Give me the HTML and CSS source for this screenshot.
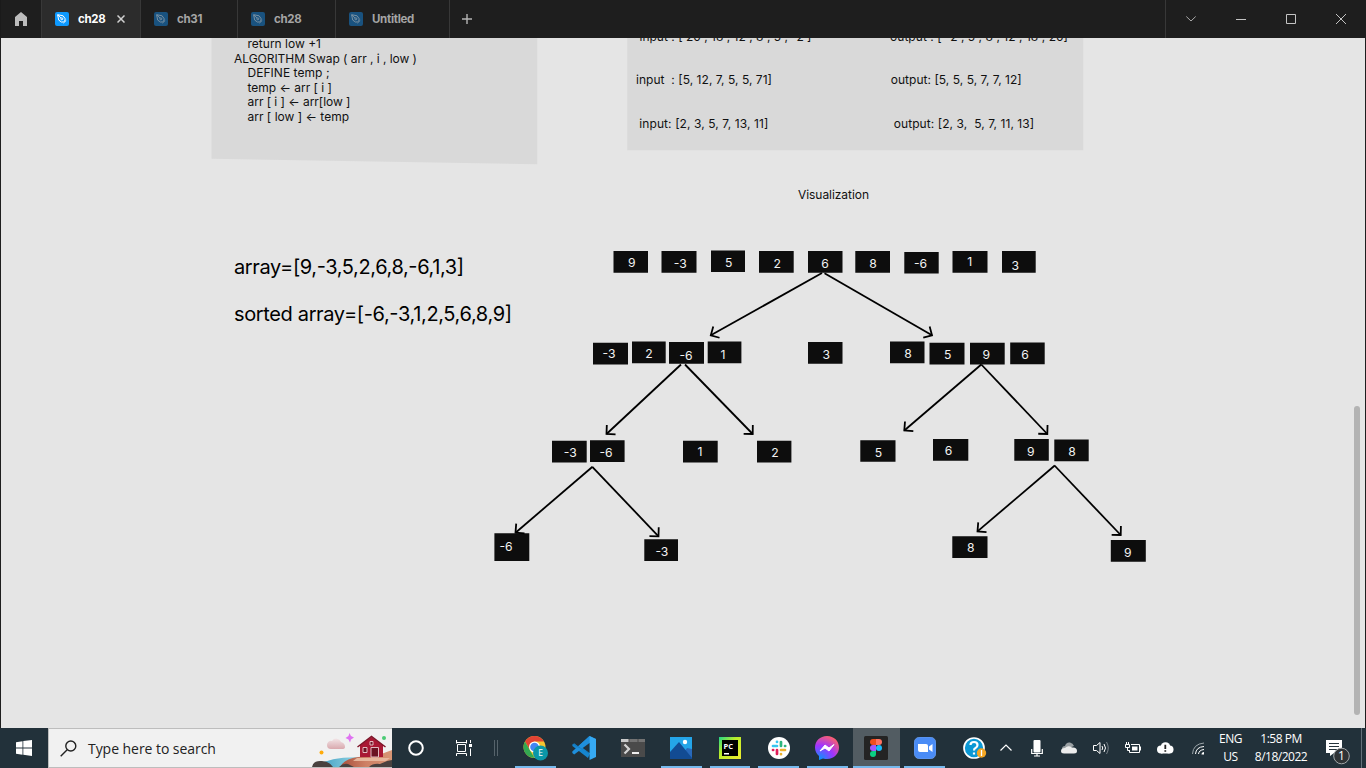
FILE: index.html
```html
<!DOCTYPE html>
<html lang="en">
<head>
<meta charset="utf-8">
<title>ch28</title>
<link rel="stylesheet" href="styles.css">
</head>
<body>
<svg width="0" height="0" class="defs">
  <symbol id="nib" viewBox="0 0 14 14">
    <rect width="14" height="14" rx="2" class="nib-bg"/>
    <g fill="none" class="nib-line" stroke-width="1"><path d="M2.6 2.7 8.1 3.8 10.2 6.8 9.8 8.8 8.6 9.8 6.6 10.1 3.7 8.1Z"/><path d="M2.8 2.9 6 6.1M8.4 11.1 11.2 8.4"/><circle cx="6.8" cy="6.8" r="1"/></g>
  </symbol>
</svg>
<header class="tabs">
  <div class="home"><svg width="12" height="14" viewBox="0 0 12 14"><path d="M6 0 12 5V14H8V9H4V14H0V5Z" fill="#bcbcbc"/></svg></div>
  <div class="tab active"><svg width="14" height="14"><use href="#nib"/></svg><span>ch28</span><svg class="close" width="8" height="8" viewBox="0 0 8 8"><path d="M.5.5 7.5 7.5M7.5.5.5 7.5" stroke="#d0d0d0" stroke-width="1.5"/></svg></div>
  <div class="tab second"><svg width="14" height="14"><use href="#nib"/></svg><span>ch31</span></div>
  <div class="tab third"><svg width="14" height="14"><use href="#nib"/></svg><span>ch28</span></div>
  <div class="tab fourth"><svg width="14" height="14"><use href="#nib"/></svg><span>Untitled</span></div>
  <div class="add"><svg width="10" height="10" viewBox="0 0 10 10"><path d="M5 0V10M0 5H10" stroke="#b4b4b4" stroke-width="1.4"/></svg></div>
  <div class="controls">
    <span><svg width="12" height="8" viewBox="0 0 12 8"><path d="M1.3 1.5 6 6 10.7 1.5" fill="none" stroke="#aaa"/></svg></span>
    <span><svg width="10" height="10" viewBox="0 0 10 10"><path d="M0 5.5H10" stroke="#c4c4c4"/></svg></span>
    <span><svg width="10" height="10" viewBox="0 0 10 10"><path d="M.5.5H9.5V9.5H.5Z" fill="none" stroke="#c4c4c4"/></svg></span>
    <span><svg width="10" height="10" viewBox="0 0 10 10"><path d="M0 0 10 10M10 0 0 10" stroke="#c4c4c4"/></svg></span>
  </div>
</header>

<main class="canvas">
  <svg class="board" width="1366" height="690" viewBox="0 38 1366 690">
    <defs><marker id="head" viewBox="-10 -10 20 20" markerWidth="20" markerHeight="20" markerUnits="userSpaceOnUse" orient="auto"><path d="M-6.4 -6.4 0 0 -6.4 6.4" fill="none" stroke="#000" stroke-width="1.8"/></marker></defs>
    <path d="M211.5 38H537.3V164.3L211.5 158.7Z" class="panel"/>
    <path d="M627.3 38H1083.3V150.2H627.3Z" class="panel"/>
    <g class="note">
      <text x="247.5" y="48" textLength="73.5">return low +1</text>
      <text x="234" y="62.6" textLength="183">ALGORITHM Swap ( arr , i , low )</text>
      <text x="247.5" y="77" textLength="82">DEFINE temp ;</text>
      <text x="247.5" y="91.6" textLength="84.5">temp ← arr [ i ]</text>
      <text x="247.5" y="106" textLength="103">arr [ i ] ← arr[low ]</text>
      <text x="247.5" y="120.6" textLength="101.500">arr [ low ] ← temp</text>
      <text x="639.5" y="41.3" textLength="172">input : [ 20 , 18 , 12 , 8 , 5 , -2 ]</text>
      <text x="890" y="41.3" textLength="178">output : [ -2 , 5 , 8 , 12 , 18 , 20]</text>
      <text x="636" y="84.2" textLength="136">input  : [5, 12, 7, 5, 5, 71]</text>
      <text x="890.7" y="84.2" textLength="131">output: [5, 5, 5, 7, 7, 12]</text>
      <text x="639.3" y="127.8" textLength="129">input: [2, 3, 5, 7, 13, 11]</text>
      <text x="893.7" y="127.8" textLength="140.5">output: [2, 3,  5, 7, 11, 13]</text>
      <text x="798" y="199.2" textLength="71">Visualization</text>
    </g>
    <g class="big">
      <text x="234" y="273.5" textLength="230">array=[9,-3,5,2,6,8,-6,1,3]</text>
      <text x="234" y="320.6" textLength="278">sorted array=[-6,-3,1,2,5,6,8,9]</text>
    </g>
    <g class="boxes">
      <path d="M613.5 251h34.5v21.7h-34.5zM661.5 251h35v21.7h-35zM711 250.4h34v21.7h-34zM759 251h34.7v21.7H759zM808 251h34.5v21.7H808zM855.3 251H890v21.7h-34.7zM904.3 251.9h34.4v21.6h-34.4zM952.5 251h35v21.7h-35zM1002 251h33.7v21.7H1002z"/>
      <path d="M593 342.7h35v21.8h-35zM632 341.5h33.7v21.7H632zM669 342.1h35v21.7h-35zM707.7 341.5h33.7v21.7h-33.7zM808 342.1h34.5v21.7H808zM890 341.5h34.5v21.7H890zM929.5 342.7h35v21.8h-35zM970 342.7h34.7v21.8H970zM1010.2 342.4h34.5v21.8h-34.5z"/>
      <path d="M552 440.7h34.7v21.8H552zM590 440.2h34.6v21.8H590zM683 440.7h34.7v21.8H683zM757 440.7h34.4v21.8H757zM860.3 440.2h35.2v21.6h-35.2zM933 439h35.3v21.8H933zM1014.3 439h34.5v21.8h-34.5zM1054.3 439.5h34.4v21.8h-34.4z"/>
      <path d="M494.4 533.3h34.9V561h-34.9zM644.3 539.3H678V561h-33.7zM952.3 536.2h35.2V558h-35.2zM1110.8 540h35v21.7h-35z"/>
    </g>
    <g class="arrows">
      <path d="M822 273 710.8 335.3"/><path d="M824.5 273.3 932 335.3"/>
      <path d="M681 364.5 606.5 434"/><path d="M685 364.5 752.7 434"/>
      <path d="M981.3 364.5 904.3 430.5"/><path d="M981.3 364.5 1047.3 434"/>
      <path d="M592.5 466.8 515.5 532.7"/><path d="M592.3 466.8 658.5 536.3"/>
      <path d="M1054.8 465.5 977.5 531.4"/><path d="M1054.5 465.5 1120.7 535"/>
    </g>
    <g class="num">
      <text x="631.7" y="267.3">9</text><text x="680.3" y="267.6">-3</text><text x="728.7" y="267.3">5</text><text x="777.3" y="267.6">2</text><text x="825" y="268.3">6</text><text x="873" y="267.6">8</text><text x="920.5" y="268.3">-6</text><text x="969.7" y="266.3">1</text><text x="1015.3" y="269.6">3</text>
      <text x="609" y="358">-3</text><text x="649" y="357.6">2</text><text x="686" y="359.8">-6</text><text x="722.9" y="359">1</text><text x="826.3" y="358.6">3</text><text x="908" y="357.9">8</text><text x="947.7" y="359.3">5</text><text x="986.3" y="359.3">9</text><text x="1025" y="358.7">6</text>
      <text x="570.3" y="456.6">-3</text><text x="606" y="456.6">-6</text><text x="700" y="455.8">1</text><text x="775" y="456.7">2</text><text x="878.5" y="456.7">5</text><text x="948.5" y="455">6</text><text x="1030.8" y="455.8">9</text><text x="1072" y="456">8</text>
      <text x="506" y="551.3">-6</text><text x="661.9" y="556">-3</text><text x="970.7" y="552.3">8</text><text x="1127.7" y="556.5">9</text>
    </g>
  </svg>
  <i class="scroll"></i>
</main>

<footer class="taskbar">
  <div class="start"><svg width="16" height="16" viewBox="0 0 16 16" fill="#fff"><path d="M0 2.2 6.5 1.3V7.5H0ZM7.3 1.1 16 0V7.5H7.3ZM0 8.4H6.5V14.7L0 13.8ZM7.3 8.4H16V16L7.3 14.8Z"/></svg></div>
  <div class="search">
    <svg width="17" height="17" viewBox="0 0 17 17"><g fill="none" stroke="#222" stroke-width="1.4"><circle cx="10.8" cy="6" r="5"/><path d="M7.2 9.8.7 16.3"/></g></svg>
    <span>Type here to search</span>
    <svg class="scene" width="80" height="38" viewBox="312 729 80 38">
      <defs>
        <linearGradient id="hill" x2="1" y2="0"><stop stop-color="#a84f3c"/><stop offset=".5" stop-color="#ce8065"/><stop offset="1" stop-color="#d89675"/></linearGradient>
        <linearGradient id="river" x2="1" y2="0"><stop stop-color="#3f9cc0"/><stop offset="1" stop-color="#9bdce9"/></linearGradient>
        <linearGradient id="puff" x2="0" y2="1"><stop stop-color="#f2e4e6"/><stop offset="1" stop-color="#d9a9ae"/></linearGradient>
      </defs>
      <path d="M322 763Q334 757 362 757L346 768H318Z" fill="url(#river)"/>
      <path d="M340 767Q344 759 358 757L376 756 392 750V767Z" fill="url(#hill)"/>
      <path d="M353 761H386L390 758H357Z" fill="#e7b69c"/>
      <path d="M331 749A4 4 0 0 1 327 745 4 4 0 0 1 332 741 5 5 0 0 1 341 742Q345 743 345 747 345 749 342 749Z" fill="url(#puff)"/>
      <path d="M360 745 371.5 737 383 745V757H360Z" fill="#a91834"/>
      <path d="M357.5 747 371.5 736.5 385.5 747" fill="none" stroke="#7d1529" stroke-width="1.5"/>
      <path d="M371 747.5H378.500V757H371ZM363 747.5H367V752.5H363ZM370 741.5H373V745H370Z" fill="#6b1222" stroke="#ebcdd1" stroke-width=".9"/>
      <path d="M312 767Q313 761 320 761 328 760 333 767ZM339 767Q343 763 348 764L354 767ZM369 767Q373 763 380 764L387 761 392 760V767Z" fill="#49413f"/>
      <path d="M349.500 733 351 736 354 737.500 351 739.500 350 742.500 348.500 739.500 345.500 738 348.500 736Z" fill="#df73f1"/>
      <circle cx="321.500" cy="752.500" r="2" fill="#ffab0a"/><circle cx="384" cy="738" r="2" fill="#4bcb75"/>
    </svg>
  </div>
  <div class="sys"><svg width="18" height="18" viewBox="0 0 18 18"><circle cx="9" cy="9" r="6.8" fill="none" stroke="#fff" stroke-width="2"/></svg></div>
  <div class="sys"><svg width="17" height="16" viewBox="0 0 17 16"><path d="M.5 0V3.500M.5 2.500H10.500M10.500 0V3.500M1.500 4.500H9.500V11.500H1.500ZM.5 16V13.500H10.500V16M14.500 0V3M14.500 8.500V16" fill="none" stroke="#fff"/><path d="M13 4h3v3h-3z" fill="#fff"/></svg></div>
  <div class="sep"><i></i><i></i></div>
  <nav class="apps">
    <div class="app on"><svg width="26" height="26" viewBox="0 0 26 26"><circle cx="12.500" cy="12" r="11" fill="#f4c430"/><path d="M3 6.500A11 11 0 0 1 22 6.500H12.500L8 15Z" fill="#e24334"/><path d="M3 6.500 9 17 12.500 23A11 11 0 0 1 3 6.500Z" fill="#33a852"/><circle cx="12.500" cy="12" r="5.500" fill="#fff"/><circle cx="12.500" cy="12" r="4.300" fill="#4285f4"/><circle cx="18.500" cy="18" r="7.500" fill="#0b97a7"/><text x="18.500" y="21" class="badge-e">E</text></svg></div>
    <div class="app"><svg width="24" height="24" viewBox="0 0 24 24"><path d="M17.500 0 6 10.500 2.200 7.500.4 8.500V10L16 22 24 3Z" fill="#1686d0"/><path d="M17.500 0V7L2.200 18.500.3 17V15.500L17.500 0Z" fill="#1f8fdc"/><path d="M17.500 17 .4 8.500 2.200 7.500 17.500 18Z" fill="#1479bd"/><path d="M17.500 0 24 3V21L17.500 24Z" fill="#36a9f2"/><path d="M17.500 7V17L10.800 12Z" fill="#23333d"/></svg></div>
    <div class="app"><svg width="24" height="18" viewBox="0 0 24 18"><path d="M0 0H24V18H0Z" fill="#4a4a4a"/><path d="M0 0H24V3H0Z" fill="#737373"/><path d="M0 0H8V3H0Z" fill="#c9c9c9"/><path d="M17 0v3M8 0v3" stroke="#4a4a4a"/><path d="M3.500 5.500 8 10 3.500 14.500" fill="none" stroke="#d4d4d4" stroke-width="2.200"/><path d="M11 13H18V15H11Z" fill="#eee"/></svg></div>
    <div class="app on"><svg width="22" height="22" viewBox="0 0 22 22"><path d="M0 0H22V22H0Z" fill="#24a5e9"/><path d="M22 12V22H9L17 11Z" fill="#2869bb"/><path d="M0 15 9 5 22 21V22H0Z" fill="#124b93"/><circle cx="15" cy="5" r="2.200" fill="#fff"/></svg></div>
    <div class="app on"><svg width="22" height="22" viewBox="0 0 22 22"><defs><linearGradient id="pc" x2="1" y2="1"><stop stop-color="#21d789"/><stop offset=".4" stop-color="#b8ed2a"/><stop offset="1" stop-color="#f0ed31"/></linearGradient></defs><path d="M0 0H22V22H0Z" fill="url(#pc)"/><path d="M3 3H19V19H3Z"/><path d="M5 16H10V17.500H5Z" fill="#fff"/><text x="4.500" y="11.500" class="pc-text">PC</text></svg></div>
    <div class="app on"><svg width="22" height="22" viewBox="0 0 22 22"><circle cx="11" cy="11" r="11" fill="#fff"/><g stroke-width="2.700" stroke-linecap="round"><path d="M5 9H9M9 4.800V5" stroke="#36c5f0"/><path d="M13 5V9M17 9H17.200" stroke="#2eb67d"/><path d="M13 13H17M13 17V17.200" stroke="#ecb22e"/><path d="M9 13V17M5 13H5.200" stroke="#e01e5a"/></g></svg></div>
    <div class="app on"><svg width="24" height="24" viewBox="0 0 24 24"><defs><radialGradient id="msg" cx=".2" cy="1" r="1.100"><stop stop-color="#0099ff"/><stop offset=".55" stop-color="#a033ff"/><stop offset="1" stop-color="#ff6269"/></radialGradient></defs><path d="M12 0C5 0 0 5 0 11.600 0 15 1.500 18 4 20V24L8 22.500C17 25 24 19 24 11.600 24 5 19 0 12 0Z" fill="url(#msg)"/><path d="M5 15 10 9 14 12 19 8.500 14 15 10 12Z" fill="#fff" stroke="#fff"/></svg></div>
    <div class="app on current"><svg width="24" height="24" viewBox="0 0 24 24"><rect width="24" height="24" rx="1.500" fill="#242424"/><path d="M9 3H12V9H9A3 3 0 0 1 9 3Z" fill="#f24e1e"/><path d="M12 3H15A3 3 0 0 1 15 9H12Z" fill="#ff7262"/><path d="M9 9H12V15H9A3 3 0 0 1 9 9Z" fill="#a259ff"/><circle cx="15" cy="12" r="3" fill="#1abcfe"/><path d="M9 15H12V18A3 3 0 1 1 9 15Z" fill="#0acf83"/></svg></div>
    <div class="app on"><svg width="22" height="22" viewBox="0 0 22 22"><rect width="22" height="22" rx="6" fill="#4a8cf6" stroke="#79a9f0" stroke-width=".6"/><path d="M4 7H12Q14 7 14 9V15H6Q4 15 4 13ZM15 9.500 18.500 7V15L15 12.500Z" fill="#fff"/></svg></div>
  </nav>
  <div class="tray">
    <div class="t-help"><svg width="24" height="22" viewBox="0 0 24 22"><circle cx="11" cy="11" r="10" fill="#0c98d4" stroke="#fff" stroke-width="1.700"/><path d="M7.500 8Q7.500 5 11 5T14.500 8Q14.500 10 12.500 11 11 11.500 11 13.500M11 15.500V17.500" fill="none" stroke="#fff" stroke-width="2.200"/><circle cx="18.500" cy="16" r="4.700" fill="#f5a623"/><path d="M18.500 13V19" stroke="#fff" stroke-width="1.300"/></svg></div>
    <div class="t-up"><svg width="12" height="8" viewBox="0 0 12 8"><path d="M.5 6.500 6 1 11.500 6.500" fill="none" stroke="#fff" stroke-width="1.200"/></svg></div>
    <div class="t-mic"><svg width="12" height="17" viewBox="0 0 12 17"><rect x="2.500" width="7" height="12.500" rx="1" fill="#fff"/><path d="M.7 9V13.500H11.300V9M6 13V16M3 16H9" fill="none" stroke="#fff" stroke-width="1.200"/></svg></div>
    <div class="t-cloud"><svg width="17" height="12" viewBox="0 0 17 12"><path d="M1 7Q1 4 4 4 5 0 9 .5 12 1 13 4L4 8Z" fill="#9ba1a4"/><path d="M3 11.500Q0 11.500 0 9 0 6 4 6 7 3 11 5.500 16 5 16 9 16 11.500 13 11.500Z" fill="#ececec"/></svg></div>
    <div class="t-vol"><svg width="17" height="14" viewBox="0 0 17 14"><path d="M.5 4.500H3.500L7 1.500V12.500L3.500 9.500H.5ZM9 5Q10.500 7 9 9M11 3Q14 7 11 11" fill="none" stroke="#fff"/><path d="M13.500 1Q17 7 13.500 13" fill="none" stroke="#778087"/></svg></div>
    <div class="t-bat"><svg width="17" height="12" viewBox="0 0 17 12"><path d="M1.500 0V2M3.500 0V2M2.500 6V8.500H5" fill="none" stroke="#fff"/><path d="M.5 2.500H4.500V5.500H.5Z" fill="none" stroke="#fff"/><path d="M6 2.500H14.500V10.500H4.500V8M15.500 4.500V8.500" fill="none" stroke="#fff"/><path d="M7 4.500H12.500V8.500H7Z" fill="#fff"/></svg></div>
    <div class="t-alert"><svg width="17" height="12" viewBox="0 0 17 12"><g fill="#fff"><circle cx="4" cy="7.500" r="4"/><circle cx="8.500" cy="5" r="4.800"/><circle cx="12.500" cy="7.500" r="4"/><path d="M4 7H12.500V11.500H4Z"/></g><path d="M8.300 2.800V7M8.300 8.200V9.700" stroke="#222" stroke-width="1.800"/></svg></div>
    <div class="t-wifi"><svg width="13" height="13" viewBox="0 0 13 13"><path d="M.5 12Q1 2 12 1" fill="none" stroke="#9ca5aa"/><path d="M3.500 12Q4 5 12 4.500M6.500 12Q7 8 12 7.500" fill="none" stroke="#fff"/><path d="M9.500 12.500Q9.500 10 12 10V12.500Z" fill="#fff"/></svg></div>
    <div class="lang"><span>ENG</span><span>US</span></div>
    <div class="clock"><span>1:58 PM</span><span>8/18/2022</span></div>
    <div class="note-ic"><svg width="25" height="25" viewBox="0 0 25 25"><path d="M0 0H16V13H8L4 16V13H0Z" fill="#fff"/><path d="M3 3.500H13M3 6.500H13M3 9.500H13" stroke="#26343c"/><circle cx="15.500" cy="16" r="7.800" fill="#2f3336" stroke="#a2a6a8"/><text x="15.500" y="20.300" class="count">1</text></svg></div>
    <i class="edge"></i>
  </div>
</footer>
</body>
</html>
```
FILE: styles.css
```css
* { box-sizing: border-box; }
body { margin: 0; width: 1366px; height: 768px; overflow: hidden; display: flex; flex-direction: column; font-family: Inter, sans-serif; }
svg { display: block; flex: none; }
.defs { position: absolute; }
.tabs { height: 38px; flex: none; display: flex; background: #1e1e1e; border-left: 1px solid #1a1a1a; }
.home { width: 40px; display: flex; align-items: center; justify-content: center; }
.tab { display: flex; align-items: center; gap: 9px; padding-left: 13px; border-left: 1px solid #383838; color: #a5a5a5; font-size: 11.5px; font-weight: 700; letter-spacing: -.3px; }
.tab.active { --nib: #0d99ff; --nib-line: #fff; width: 99px; background: #2c2c2c; color: #fff; }
.tab.second { width: 97px; }
.tab.third { width: 98px; }
.tab.fourth { width: 114px; }
.close { margin-left: 3px; }
.nib-bg { fill: var(--nib, #19527f); }
.nib-line { stroke: var(--nib-line, #7990a2); }
.add { width: 35px; border-left: 1px solid #383838; display: flex; align-items: center; justify-content: center; }
.controls { margin-left: auto; display: flex; border-left: 1px solid #383838; }
.controls span { width: 50px; display: flex; align-items: center; justify-content: center; }
.canvas { position: relative; height: 690px; flex: none; background: #e5e5e5; overflow: hidden; box-shadow: inset 1px 0 #1e1e1e, inset -1px 0 #1e1e1e; }
.scroll { position: absolute; right: 6px; top: 368px; width: 6px; height: 309px; border-radius: 3px; background: #b3b3b3; }
.panel { fill: #d9d9d9; }
.note text { font-size: 12px; white-space: pre; fill: #111; }
.big text { font-size: 20px; fill: #000; }
.boxes { fill: #0d0d0d; }
.arrows path { stroke: #000; stroke-width: 1.8; marker-end: url(#head); }
.num text { font-size: 12.2px; fill: #f2f2f2; text-anchor: middle; }
.taskbar { height: 40px; flex: none; display: flex; align-items: stretch; background: #22313a; font-family: "Open Sans", "Noto Sans", sans-serif; }
.start { width: 48px; display: flex; align-items: center; justify-content: center; }
.search { width: 344px; display: flex; align-items: center; padding-left: 11px; gap: 11px; background: #f1f1f1; border: 1px solid #bdbdbd; border-right: 0; font-size: 14px; color: #222; letter-spacing: -.05px; white-space: nowrap; flex: none; }
.scene { margin-left: auto; }
.sys { width: 48px; flex: none; display: flex; align-items: center; justify-content: center; }
.sep { width: 23px; flex: none; display: flex; align-items: center; gap: 2px; padding-left: 6px; }
.sep i { width: 1px; height: 16px; background: #56636b; }
.apps { display: flex; width: 438px; flex: none; }
.app { flex: 1; display: flex; align-items: center; justify-content: center; position: relative; }
.app.on::after { content: ""; position: absolute; left: 4px; right: 4px; bottom: 0; height: 2px; background: #76b9ed; }
.app.current { background: linear-gradient(90deg, transparent 1px, #525c62 1px); }
.app.current::after { left: 1px; right: 0; }
.badge-e { font: 8.5px "Open Sans", sans-serif; fill: #fff; text-anchor: middle; }
.pc-text { font: 700 7.5px "Open Sans", sans-serif; fill: #fff; }
.count { font: 12px "Open Sans", sans-serif; fill: #fff; text-anchor: middle; }
.tray { flex: 1; min-width: 0; display: flex; align-items: center; color: #fff; font-size: 12px; line-height: 18px; }
.tray > div { display: flex; justify-content: center; align-items: center; flex: none; }
.t-help { width: 51px; }
.t-up { width: 11px; margin-right: 10px; }
.t-mic { width: 32px; }
.t-cloud { width: 32px; }
.t-vol { width: 32px; }
.t-bat { width: 33px; }
.t-alert { width: 31px; }
.t-wifi { width: 34px; }
.tray .lang, .tray .clock { flex-direction: column; letter-spacing: -.5px; }
.lang { width: 31px; }
.clock { width: 70px; }
.note-ic { width: 45px; padding-top: 8px; }
.edge { width: 1px; height: 40px; background: #63717a; margin-left: auto; margin-right: 4px; }
```
